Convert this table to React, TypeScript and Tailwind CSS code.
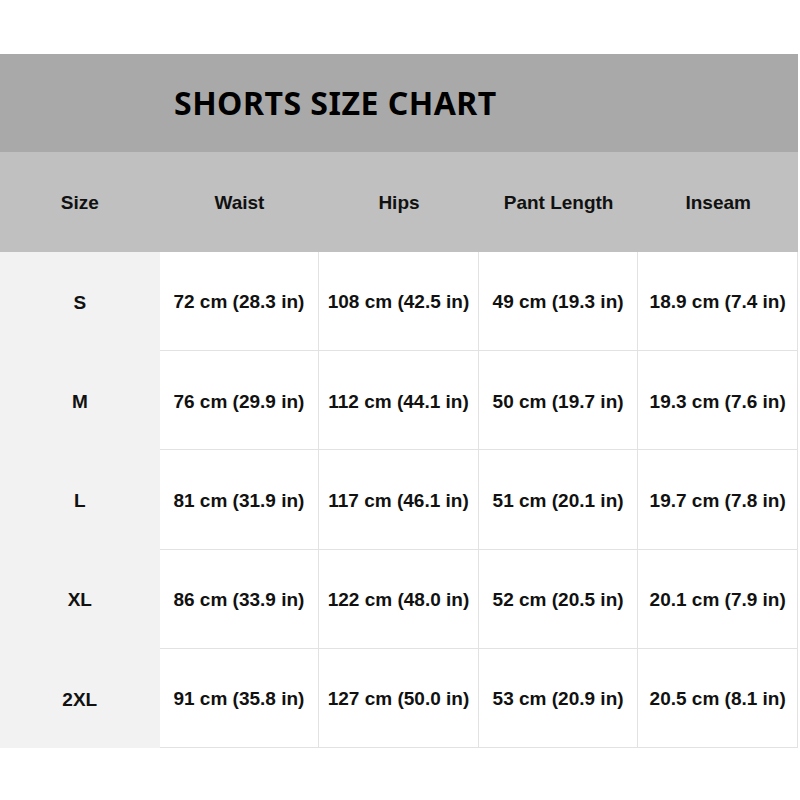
import React from "react";

const rows = [
  ["S", "72 cm (28.3 in)", "108 cm (42.5 in)", "49 cm (19.3 in)", "18.9 cm (7.4 in)"],
  ["M", "76 cm (29.9 in)", "112 cm (44.1 in)", "50 cm (19.7 in)", "19.3 cm (7.6 in)"],
  ["L", "81 cm (31.9 in)", "117 cm (46.1 in)", "51 cm (20.1 in)", "19.7 cm (7.8 in)"],
  ["XL", "86 cm (33.9 in)", "122 cm (48.0 in)", "52 cm (20.5 in)", "20.1 cm (7.9 in)"],
  ["2XL", "91 cm (35.8 in)", "127 cm (50.0 in)", "53 cm (20.9 in)", "20.5 cm (8.1 in)"],
];

const headers = ["Size", "Waist", "Hips", "Pant Length", "Inseam"];

export default function App() {
  return (
    <div className="w-[800px] h-[800px] bg-white pt-[54px]" style={{ fontFamily: '"Liberation Sans", Arial, sans-serif' }}>
      <div className="w-[798px]">
        <div
          className="h-[98px] bg-[#a9a9a9] flex items-center pl-[174px] pb-[1px] text-black font-bold text-[32px] tracking-[0.5px]"
          style={{ fontFamily: '"Noto Sans", sans-serif' }}
        >
          SHORTS SIZE CHART
        </div>
        <div className="h-[100px] bg-[#c0c0c0] grid grid-cols-5">
          {headers.map((h) => (
            <div key={h} className="flex items-center justify-center pt-[3px] font-bold text-[19px] text-[#111]">
              {h}
            </div>
          ))}
        </div>
        {rows.map((r) => (
          <div key={r[0]} className="h-[99.2px] grid grid-cols-5">
            <div className="bg-[#f2f2f2] flex items-center justify-center pt-[3px] font-bold text-[19px] text-[#111]">
              {r[0]}
            </div>
            {r.slice(1).map((c, i) => (
              <div
                key={i}
                className="bg-white border-b border-r border-[#e2e2e2] flex items-center justify-center pt-[3px] font-bold text-[19px] text-[#111] whitespace-nowrap"
              >
                {c}
              </div>
            ))}
          </div>
        ))}
      </div>
    </div>
  );
}
